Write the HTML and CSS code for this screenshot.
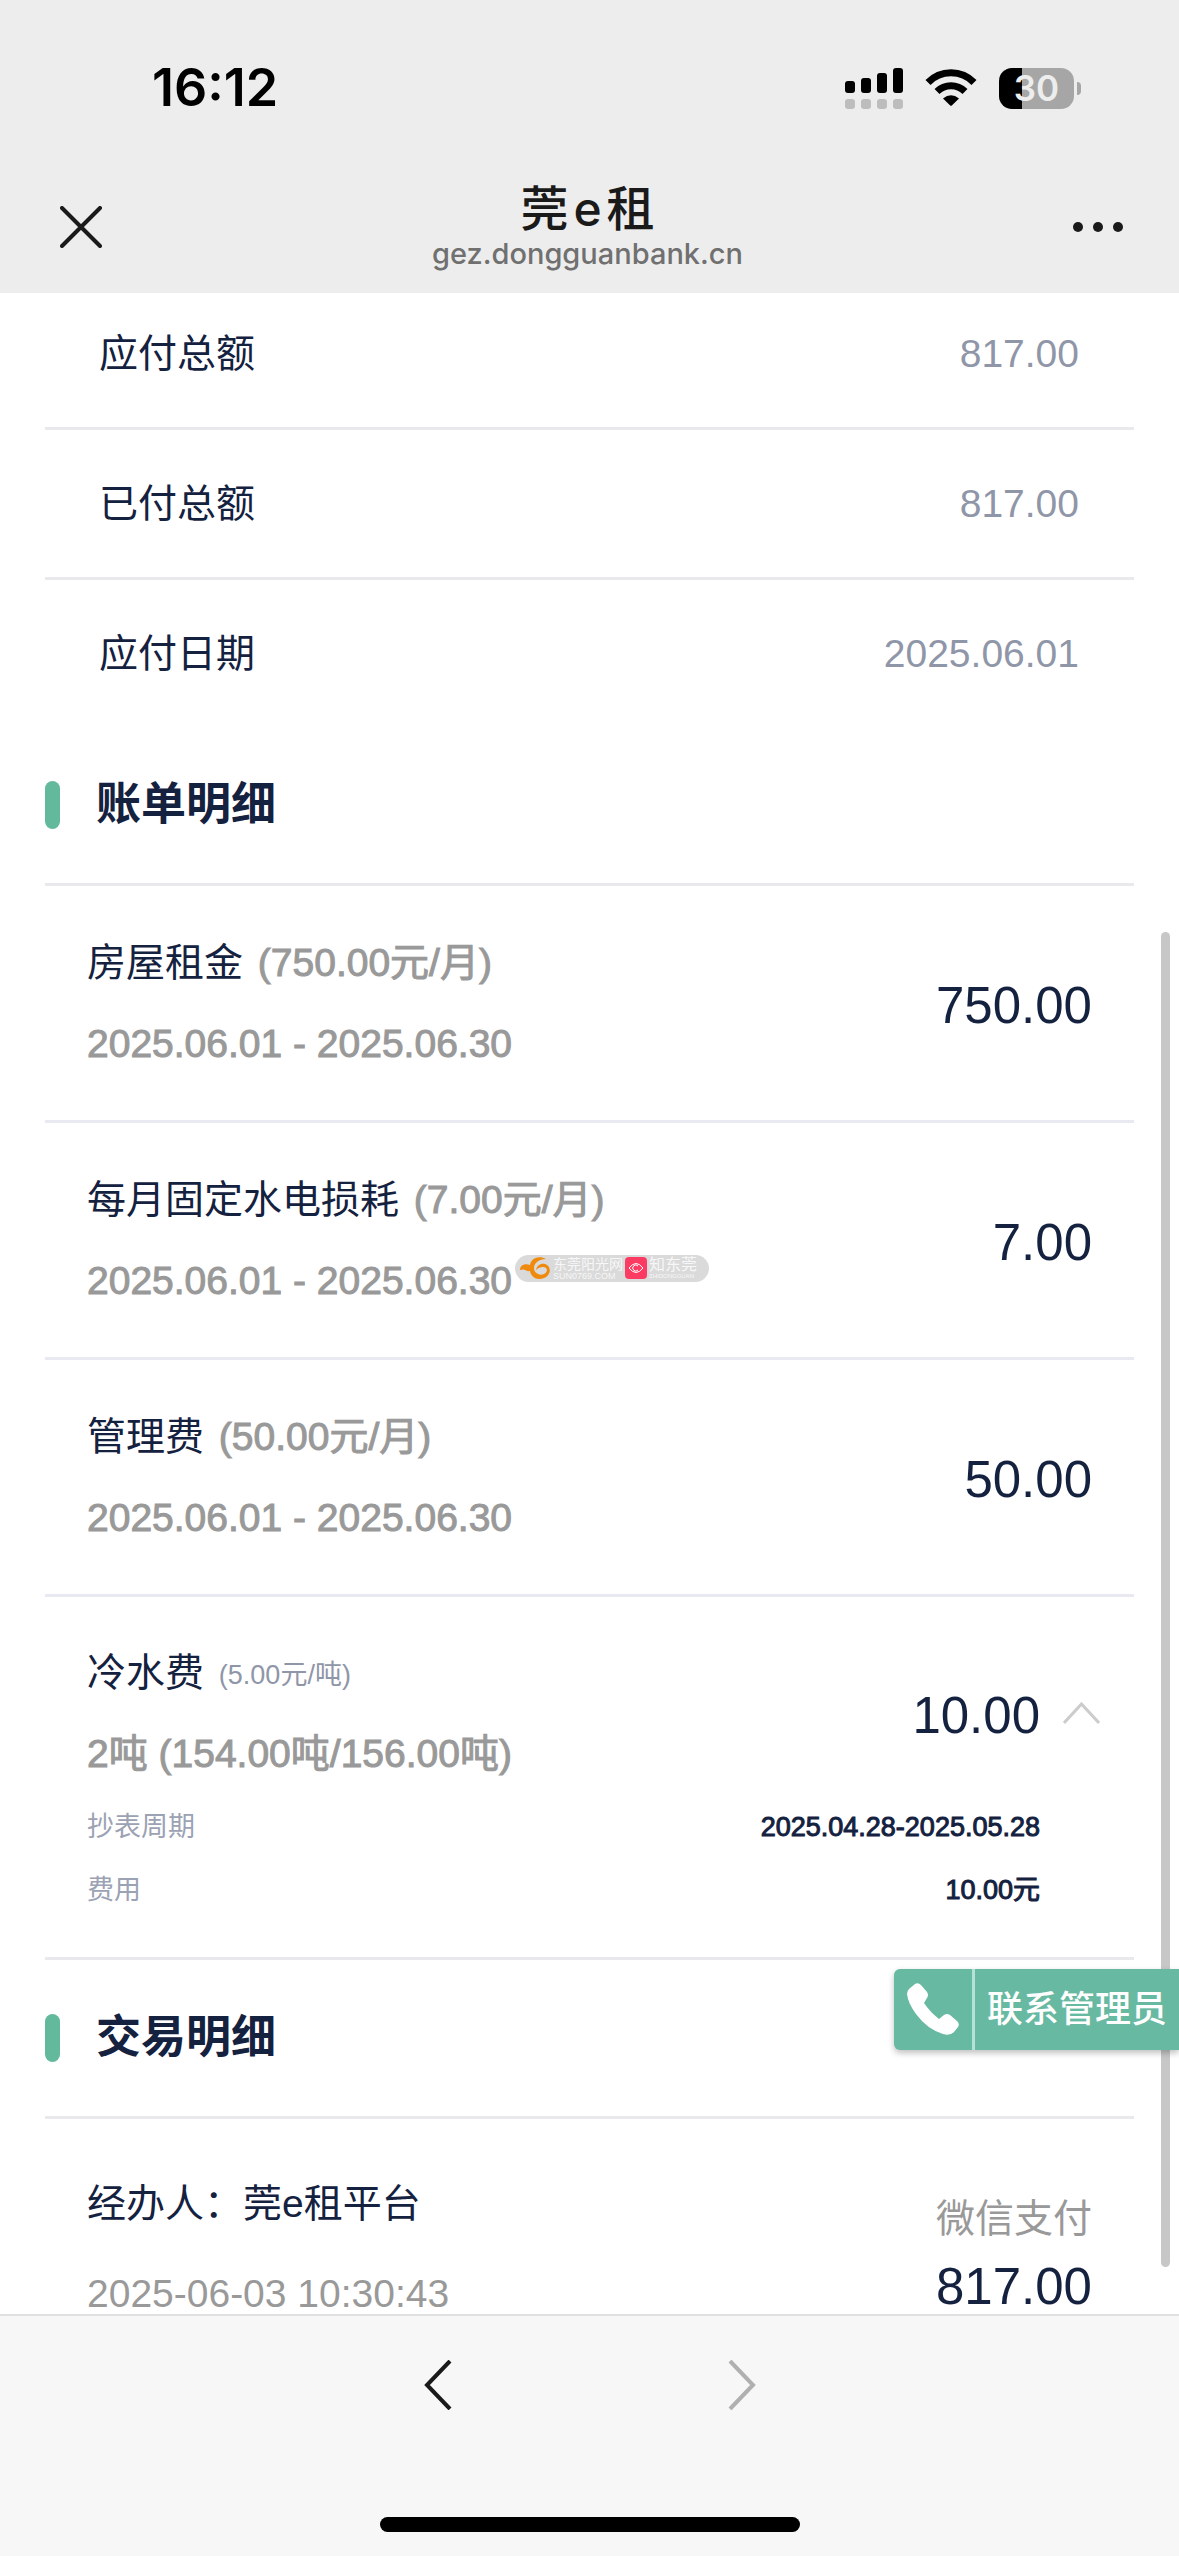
FILE: index.html
```html
<!DOCTYPE html>
<html lang="zh-CN">
<head>
  <meta charset="UTF-8">
  <meta name="viewport" content="width=device-width, initial-scale=1.0">
  <title>莞e租</title>
  <link rel="stylesheet" href="styles.css">
</head>
<body>
  <header class="header">
    <div class="status-bar">
      <span class="time">16:12</span>
      <div class="status-icons">
        <svg class="signal" width="58" height="41" viewBox="0 0 58 41">
          <g fill="#000">
            <rect x="0" y="13" width="10" height="12" rx="3"/>
            <rect x="16" y="10" width="10" height="15" rx="3"/>
            <rect x="32" y="5" width="10" height="20" rx="3"/>
            <rect x="48" y="0" width="10" height="25" rx="3"/>
          </g>
          <g fill="#bdbdbd">
            <rect x="0" y="31" width="10" height="10" rx="3"/>
            <rect x="16" y="31" width="10" height="10" rx="3"/>
            <rect x="32" y="31" width="10" height="10" rx="3"/>
            <rect x="48" y="31" width="10" height="10" rx="3"/>
          </g>
        </svg>
        <svg class="wifi" width="52" height="38" viewBox="0 0 52 38">
          <path d="M3 13.500A32 32 0 0 1 49 13.500" fill="none" stroke="#000" stroke-width="7"/>
          <path d="M12 22.500A20 20 0 0 1 40 22.500" fill="none" stroke="#000" stroke-width="7"/>
          <path d="M18 29.500Q26 23 34 29.500L26.800 36.500Q26 37.200 25.200 36.500Z" fill="#000"/>
        </svg>
        <div class="battery">
          <span class="battery-level">30</span>
        </div>
      </div>
    </div>
    <nav class="nav-bar">
      <button class="icon-button" type="button" aria-label="关闭">
        <svg width="42" height="42" viewBox="0 0 42 42" fill="none" stroke="#1a1a1a" stroke-width="4" stroke-linecap="round">
          <path d="M2 2L40 40M40 2L2 40"/>
        </svg>
      </button>
      <div class="nav-title">
        <h1>莞<span class="latin">e</span>租</h1>
        <p>gez.dongguanbank.cn</p>
      </div>
      <button class="icon-button" type="button" aria-label="更多">
        <svg width="50" height="10" viewBox="0 0 50 10" fill="#1a1a1a">
          <circle cx="5" cy="5" r="5"/>
          <circle cx="25" cy="5" r="5"/>
          <circle cx="45" cy="5" r="5"/>
        </svg>
      </button>
    </nav>
  </header>

  <main class="content">
    <div class="page">
      <dl class="summary">
        <div class="summary-row"><dt>应付总额</dt><dd>817.00</dd></div>
        <div class="summary-row"><dt>已付总额</dt><dd>817.00</dd></div>
        <div class="summary-row"><dt>应付日期</dt><dd>2025.06.01</dd></div>
      </dl>

      <section>
        <h2 class="section-title">账单明细</h2>
        <div class="item">
          <div class="item-info">
            <div class="item-name">房屋租金 <span class="price">(750.00元/月)</span></div>
            <div class="item-date">2025.06.01 - 2025.06.30</div>
          </div>
          <div class="amount">750.00</div>
        </div>
        <div class="item">
          <div class="item-info">
            <div class="item-name">每月固定水电损耗 <span class="price">(7.00元/月)</span></div>
            <div class="item-date">2025.06.01 - 2025.06.30
              <div class="watermark">
                <svg width="32" height="24" viewBox="0 0 32 24">
                  <path d="M1 14C1 9 6 7 11 9C12 2 20-1 27 3C20 3 15 7 15 12C15 17 20 20 25 18C29 16 29 11 24 11C21 11 19 12 17 14C18 9 22 7 26 8C33 10 32 20 25 22C18 25 12 21 11 15C7 16 6 12 1 14Z" fill="#f08a0c"/>
                </svg>
                <span class="watermark-text">东莞阳光网<small>SUN0769.COM</small></span>
                <svg width="22" height="22" viewBox="0 0 22 22">
                  <rect width="22" height="22" rx="4" fill="#fb3b62"/>
                  <path d="M4 11Q11 2 18 11Q11 20 4 11Z" fill="none" stroke="#fff"/>
                  <path d="M13 9A3 3 0 1 0 13 13" fill="none" stroke="#fff"/>
                </svg>
                <span class="watermark-text large">知东莞<small>ZHIDONGGUAN</small></span>
              </div>
            </div>
          </div>
          <div class="amount">7.00</div>
        </div>
        <div class="item">
          <div class="item-info">
            <div class="item-name">管理费 <span class="price">(50.00元/月)</span></div>
            <div class="item-date">2025.06.01 - 2025.06.30</div>
          </div>
          <div class="amount">50.00</div>
        </div>
        <div class="item water">
          <div class="item-info">
            <div class="item-name">冷水费 <span class="price small">(5.00元/吨)</span></div>
            <div class="item-date">2吨 (154.00吨/156.00吨)</div>
          </div>
          <div class="amount">10.00</div>
          <button class="toggle" type="button" aria-label="收起">
            <svg width="37" height="22" viewBox="0 0 37 22" fill="none" stroke="#ccc" stroke-width="3">
              <path d="M1 21L18.500 2L36 21"/>
            </svg>
          </button>
        </div>
        <dl class="meter">
          <div class="meter-row"><dt>抄表周期</dt><dd>2025.04.28-2025.05.28</dd></div>
          <div class="meter-row"><dt>费用</dt><dd>10.00元</dd></div>
        </dl>
      </section>

      <section>
        <h2 class="section-title">交易明细</h2>
        <div class="trade">
          <div class="trade-info">
            <div class="item-name">经办人：莞e租平台</div>
            <div class="trade-time">2025-06-03 10:30:43</div>
          </div>
          <div class="trade-pay">
            <div class="pay-type">微信支付</div>
            <div class="amount">817.00</div>
          </div>
        </div>
      </section>
    </div>

    <div class="scrollbar"></div>
    <button class="contact" type="button">
      <span class="contact-icon">
        <svg width="52" height="52" viewBox="0 0 52 52" fill="#fff">
          <path d="M2 6L8 1Q11-1 14 2L20 9Q22 12 20 15L17 20Q23 29 32 36L37 32Q40 30 43 32L50 38Q53 41 51 44L47 49Q43 53 36 51Q20 46 9 31Q1 20 0 11Q0 8 2 6Z"/>
        </svg>
      </span>
      <span class="contact-text">联系管理员</span>
    </button>
  </main>

  <footer class="toolbar">
    <div class="toolbar-buttons">
      <button class="icon-button" type="button" aria-label="后退">
        <svg width="28" height="50" viewBox="0 0 28 50" fill="none" stroke="#1a1a1a" stroke-width="4">
          <path d="M26 1L3 25L26 49"/>
        </svg>
      </button>
      <button class="icon-button" type="button" aria-label="前进" disabled>
        <svg width="28" height="50" viewBox="0 0 28 50" fill="none" stroke="#b0b0b0" stroke-width="4">
          <path d="M2 1L25 25L2 49"/>
        </svg>
      </button>
    </div>
    <div class="home-indicator"></div>
  </footer>
</body>
</html>
```
FILE: styles.css
```css
* {
  margin: 0;
  padding: 0;
  box-sizing: border-box;
}

body {
  height: 100vh;
  display: flex;
  flex-direction: column;
  font-family: "Liberation Sans", "Noto Sans CJK SC", sans-serif;
  font-size: 39px;
  line-height: 60px;
  color: #14213f;
  background: #fff;
}

button {
  border: none;
  background: none;
  font: inherit;
  cursor: pointer;
}

svg {
  display: block;
}

/* header */
.header {
  flex: none;
  background: #ededed;
}

.status-bar {
  height: 176px;
  padding: 0 98px 0 152px;
  display: flex;
  align-items: center;
  justify-content: space-between;
}

.time {
  font-family: Inter, sans-serif;
  font-size: 52px;
  font-weight: 600;
  color: #000;
}

.status-icons {
  display: flex;
  align-items: center;
}

.wifi {
  margin: 0 22px;
}

.battery {
  position: relative;
  width: 75px;
  height: 41px;
  margin-right: 7px;
  border-radius: 13px;
  background: linear-gradient(to right, #000 23px, #a6a6a6 23px);
  text-align: center;
}

.battery::after {
  content: "";
  position: absolute;
  left: 78px;
  top: 14px;
  width: 4px;
  height: 13px;
  border-radius: 0 4px 4px 0;
  background: #a6a6a6;
}

.battery-level {
  display: block;
  font-family: Inter, sans-serif;
  font-size: 35px;
  font-weight: 600;
  line-height: 41px;
  color: #ededed;
}

.nav-bar {
  height: 117px;
  padding: 0 56px 16px 60px;
  display: flex;
  align-items: center;
  justify-content: space-between;
}

.nav-title {
  text-align: center;
}

.nav-title h1 {
  font-family: Inter, "Noto Sans CJK SC", sans-serif;
  font-size: 48px;
  font-weight: 500;
  line-height: 54px;
  color: #1a1a1a;
}

.nav-title .latin {
  margin: 0 5px;
}

.nav-title p {
  font-family: Inter, sans-serif;
  font-size: 29px;
  font-weight: 500;
  line-height: 36px;
  color: #707070;
}

/* page content */
.content {
  flex: 1;
  min-height: 0;
  position: relative;
  overflow: hidden;
}

.page {
  padding: 0 45px;
}

.summary {
  margin-top: -13px;
}

.summary-row {
  height: 150px;
  padding: 0 55px 0 54px;
  display: flex;
  align-items: center;
  justify-content: space-between;
  border-bottom: 3px solid #e9e9ed;
}

.summary-row:last-child {
  height: 147px;
  border-bottom: none;
}

.summary-row dd {
  color: #8f96a8;
}

.section-title {
  height: 159px;
  display: flex;
  align-items: center;
  gap: 36px;
  font-size: 45px;
  font-weight: 700;
  border-bottom: 3px solid #e9e9ed;
}

.section-title::before {
  content: "";
  width: 15px;
  height: 48px;
  border-radius: 8px;
  background: #62b99c;
}

.item {
  height: 237px;
  padding: 0 42px;
  display: flex;
  align-items: center;
  border-bottom: 3px solid #e9e9f1;
}

.item-info {
  flex: 1;
}

.item-name {
  margin-bottom: 21px;
}

.price {
  margin-left: 4px;
  color: #999;
  -webkit-text-stroke: 1px #999;
}

.price.small {
  font-size: 27px;
  line-height: 27px;
  vertical-align: 2px;
  color: #8f96a8;
  -webkit-text-stroke: 0;
}

.item-date {
  position: relative;
  color: #999;
  -webkit-text-stroke: 1px #999;
}

.amount {
  font-size: 51px;
}

.item .amount {
  padding-top: 6px;
}

.water {
  height: 198px;
  padding: 34px 34px 0 42px;
  border-bottom: none;
}

.toggle {
  margin-left: 23px;
}

.meter {
  padding: 0 94px 36px 42px;
  border-bottom: 3px solid #e9e9ed;
  font-size: 27px;
}

.meter-row {
  height: 63px;
  display: flex;
  align-items: center;
  justify-content: space-between;
}

.meter-row dt {
  color: #9ba2b3;
}

.meter-row dd {
  -webkit-text-stroke: 1px #14213f;
}

.trade {
  padding: 61px 42px 0;
  display: flex;
  justify-content: space-between;
  line-height: 48px;
}

.trade .item-name {
  margin-bottom: 42px;
}

.trade-time {
  color: #999;
}

.trade-pay {
  padding-top: 15px;
  text-align: right;
}

.pay-type {
  margin-bottom: 20px;
  color: #999;
}

/* floating things */
.watermark {
  position: absolute;
  left: 428px;
  top: 4px;
  height: 27px;
  padding: 0 12px 0 4px;
  display: flex;
  align-items: center;
  gap: 2px;
  border-radius: 14px;
  background: #dadada;
  -webkit-text-stroke: 0;
}

.watermark-text {
  font-size: 14px;
  line-height: 15px;
  color: #f7f7f7;
  white-space: nowrap;
}

.watermark-text.large {
  font-size: 16px;
}

.watermark-text small {
  display: block;
  font-size: 9px;
  line-height: 8px;
}

.watermark-text.large small {
  font-size: 6px;
}

.scrollbar {
  position: absolute;
  top: 639px;
  bottom: 47px;
  right: 9px;
  width: 9px;
  border-radius: 5px;
  background: #c7c7c7;
}

.contact {
  position: absolute;
  right: 0;
  bottom: 264px;
  height: 81px;
  display: flex;
  align-items: center;
  border-radius: 6px 0 0 6px;
  background: #68b9a2;
  box-shadow: 0 3px 6px rgba(0, 0, 0, 0.25);
  color: #fff;
}

.contact-icon {
  height: 81px;
  padding: 14px 13px;
  border-right: 3px solid #b4e3d5;
}

.contact-text {
  padding: 0 12px;
  font-size: 36px;
  font-weight: 500;
}

/* bottom toolbar */
.toolbar {
  flex: none;
  padding-bottom: 24px;
  border-top: 2px solid #e0e0e0;
  background: #f7f7f7;
}

.toolbar-buttons {
  height: 201px;
  padding-top: 44px;
  display: flex;
  justify-content: center;
  align-items: flex-start;
  gap: 276px;
}

.home-indicator {
  width: 420px;
  height: 15px;
  margin: 0 auto;
  border-radius: 8px;
  background: #000;
}
```
